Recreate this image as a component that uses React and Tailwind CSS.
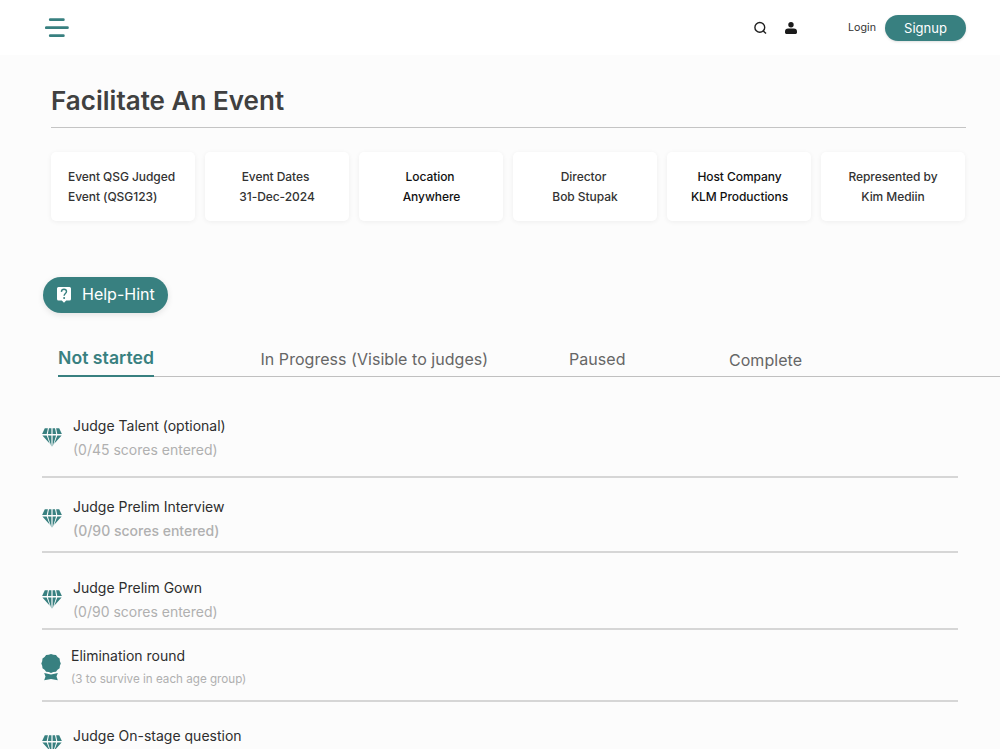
import { clsx } from "clsx";

const cards = [
  { label: "Event QSG Judged", value: "Event (QSG123)", left: true },
  { label: "Event Dates", value: "31-Dec-2024", nudge: true },
  { label: "Location", value: "Anywhere", nudge: true, dark: true },
  { label: "Director", value: "Bob Stupak", nudge: true },
  { label: "Host Company", value: "KLM Productions", dark: true },
  { label: "Represented by", value: "Kim Mediin" },
];

const rounds = [
  { title: "Judge Talent (optional)", note: "(0/45 scores entered)", box: "h-[81px] pt-[17px]" },
  { title: "Judge Prelim Interview", note: "(0/90 scores entered)", box: "h-[75px] pt-[17px]", strong: true },
  { title: "Judge Prelim Gown", note: "(0/90 scores entered)", box: "h-[77px] pt-[23px]" },
  { title: "Elimination round", note: "(3 to survive in each age group)", box: "h-[72px] pt-[14px]", award: true },
  { title: "Judge On-stage question", box: "h-[80px] pt-[22px]" },
];

const MenuIcon = () => (
  <svg width="24" height="20" viewBox="0 0 24 20" stroke="#388080" strokeWidth="2.7" strokeLinecap="round">
    <path d="M5.2 1.7h13.2M1.3 9.7h21.2M5.2 17.7h13.2" />
  </svg>
);

const SearchIcon = () => (
  <svg width="14" height="14" viewBox="0 0 14 14" fill="none" stroke="#1f1f1f" strokeWidth="1.4">
    <circle cx="6.8" cy="6.4" r="4.9" />
    <path d="M10.3 9.9l2.7 2.7" />
  </svg>
);

const UserIcon = () => (
  <svg width="12" height="12" viewBox="0 0 12 12" fill="#1a1a1a">
    <circle cx="6" cy="2.7" r="2.7" />
    <path d="M3.2 6.6h5.6A3.2 3.2 0 0 1 12 9.8v.7q0 1.4-1.3 1.4H1.3Q0 11.9 0 10.5v-.7A3.2 3.2 0 0 1 3.2 6.6z" />
  </svg>
);

const HelpIcon = () => (
  <svg width="14" height="16" viewBox="0 0 14 16">
    <path d="M1.5 0h11A1.5 1.5 0 0 1 14 1.5v10.6a1.5 1.5 0 0 1-1.5 1.5H9.2L7 15.8l-2.2-2.2H1.5A1.5 1.5 0 0 1 0 12.1V1.5A1.5 1.5 0 0 1 1.5 0z" fill="#fff" />
    <path d="M4.4 4.9C4.5 3.2 5.5 2.3 7 2.3s2.5.9 2.5 2.3c0 1.8-2.4 2.1-2.4 4.2" fill="none" stroke="#388080" strokeWidth="1.4" />
    <circle cx="7.1" cy="10.9" r="1" fill="#388080" />
  </svg>
);

const DiamondIcon = () => (
  <svg width="20" height="20" viewBox="0 0 20 20" fill="#388080">
    <path d="M2.8.3h3.1L4.7 5.9H.1zM7 .3h2.4v5.6H5.8zM10.600.3H13l1.200 5.600h-3.600zM14.100.3h3.100l2.700 5.600h-4.600zM.4 7.400h4.300l3.100 8.400zM5.900 7.400h3.500v11.400zM10.600 7.400h3.500l-3.500 11.400zM15.300 7.400h4.300l-7.400 8.400z" />
  </svg>
);

const AwardIcon = () => (
  <svg width="20" height="28" viewBox="0 0 20 28" fill="#388080" className="-ml-px">
    <path d="M10 .9l2.400.9 2.600.2 1.500 2.100 2.100 1.500.3 2.600.9 2.200-.9 2.300-.3 2.600-2.100 1.500-1.500 2-2.600.3-2.400.9-2.300-.9-2.600-.3-1.500-2-2.100-1.500-.3-2.600-.9-2.300.9-2.200.3-2.600 2.100-1.500L5.100 2l2.600-.2z" />
    <path d="M3.200 20.100l6.800 1.500 6.800-1.500-1.300 3.500 1.300 3.600-6.800-1.300-6.800 1.300 1.300-3.600z" />
  </svg>
);

export default function App() {
  return (
    <div className="h-[749px] overflow-hidden bg-[#fcfcfc] font-['Inter',sans-serif] text-[#333]">
      <header className="flex h-[55px] items-center bg-white pl-[45px] pr-[34px]">
        <button><MenuIcon /></button>
        <div className="ml-auto flex items-center">
          <SearchIcon />
          <div className="ml-[18px]"><UserIcon /></div>
          <a className="ml-[51px] pt-[2px] text-[10.7px]">Login</a>
          <button className="ml-[9px] h-[26px] w-[81px] rounded-full bg-[#388080] pt-[2px] text-[13px] text-white shadow-sm">Signup</button>
        </div>
      </header>

      <main>
        <h1 className="ml-[51px] mr-[34px] h-[73px] border-b border-[#c4c4c4] pt-[26px] text-[26px] leading-[40px] font-semibold tracking-[0.02px] text-[#404040]">
          Facilitate An Event
        </h1>

        <section className="mt-[24px] flex gap-[10px] pl-[51px]">
          {cards.map((c) => (
            <div
              key={c.label}
              className={clsx(
                "h-[69px] w-[144px] shrink-0 rounded-[5px] bg-white pt-[15px] text-[12px] leading-[20px] font-medium tracking-[-0.06px] shadow-[0_1px_5px_rgba(0,0,0,0.06)]",
                c.left ? "pl-[17px]" : "text-center",
                c.dark ? "pl-px text-[#111]" : "text-[#333]"
              )}
            >
              <p className={clsx(c.nudge && "pr-[3px]")}>{c.label}</p>
              <p>{c.value}</p>
            </div>
          ))}
        </section>

        <button className="mt-[56px] ml-[43px] flex h-[36px] w-[125px] items-center rounded-full bg-[#388080] pl-[14px] text-[16px] text-white shadow-[0_2px_6px_rgba(0,0,0,0.1)]">
          <HelpIcon />
          <span className="mb-[3px] ml-[11px]">Help-Hint</span>
        </button>

        <nav className="ml-[58px] flex h-[64px] items-end border-b border-[#c0c0c0] text-[16px] leading-[20px] tracking-[0.04px] text-[#666]">
          <div className="-mb-px h-[29px] w-[96px] border-b-2 border-[#388080] text-[17.6px] font-semibold whitespace-nowrap text-[#388080]">Not started</div>
          <div className="ml-[106.5px] h-[27px] w-[308.5px]">In Progress (Visible to judges)</div>
          <div className="h-[27px] w-[160px]">Paused</div>
          <div className="h-[26px]">Complete</div>
        </nav>

        <ul className="mt-[20px] ml-[42px] w-[916px]">
          {rounds.map((r) => (
            <li key={r.title} className={clsx("flex border-b-2 border-[#d6d6d6]", r.box)}>
              <div className={clsx("shrink-0", r.award ? "w-[29px] pt-[9px]" : "w-[31px]", !r.award && (r.note ? "pt-[14px]" : "pt-[11px]"))}>
                {r.award ? <AwardIcon /> : <DiamondIcon />}
              </div>
              <div>
                <p className="text-[14px] leading-[24px] text-[#2e2e2e]">{r.title}</p>
                {r.note && (
                  <p
                    className={clsx(
                      "text-[#b0b0b0]",
                      r.award ? "text-[11.65px] leading-[22px]" : "text-[14px] leading-[24px]",
                      r.strong && "font-medium"
                    )}
                  >
                    {r.note}
                  </p>
                )}
              </div>
            </li>
          ))}
        </ul>
      </main>
    </div>
  );
}
